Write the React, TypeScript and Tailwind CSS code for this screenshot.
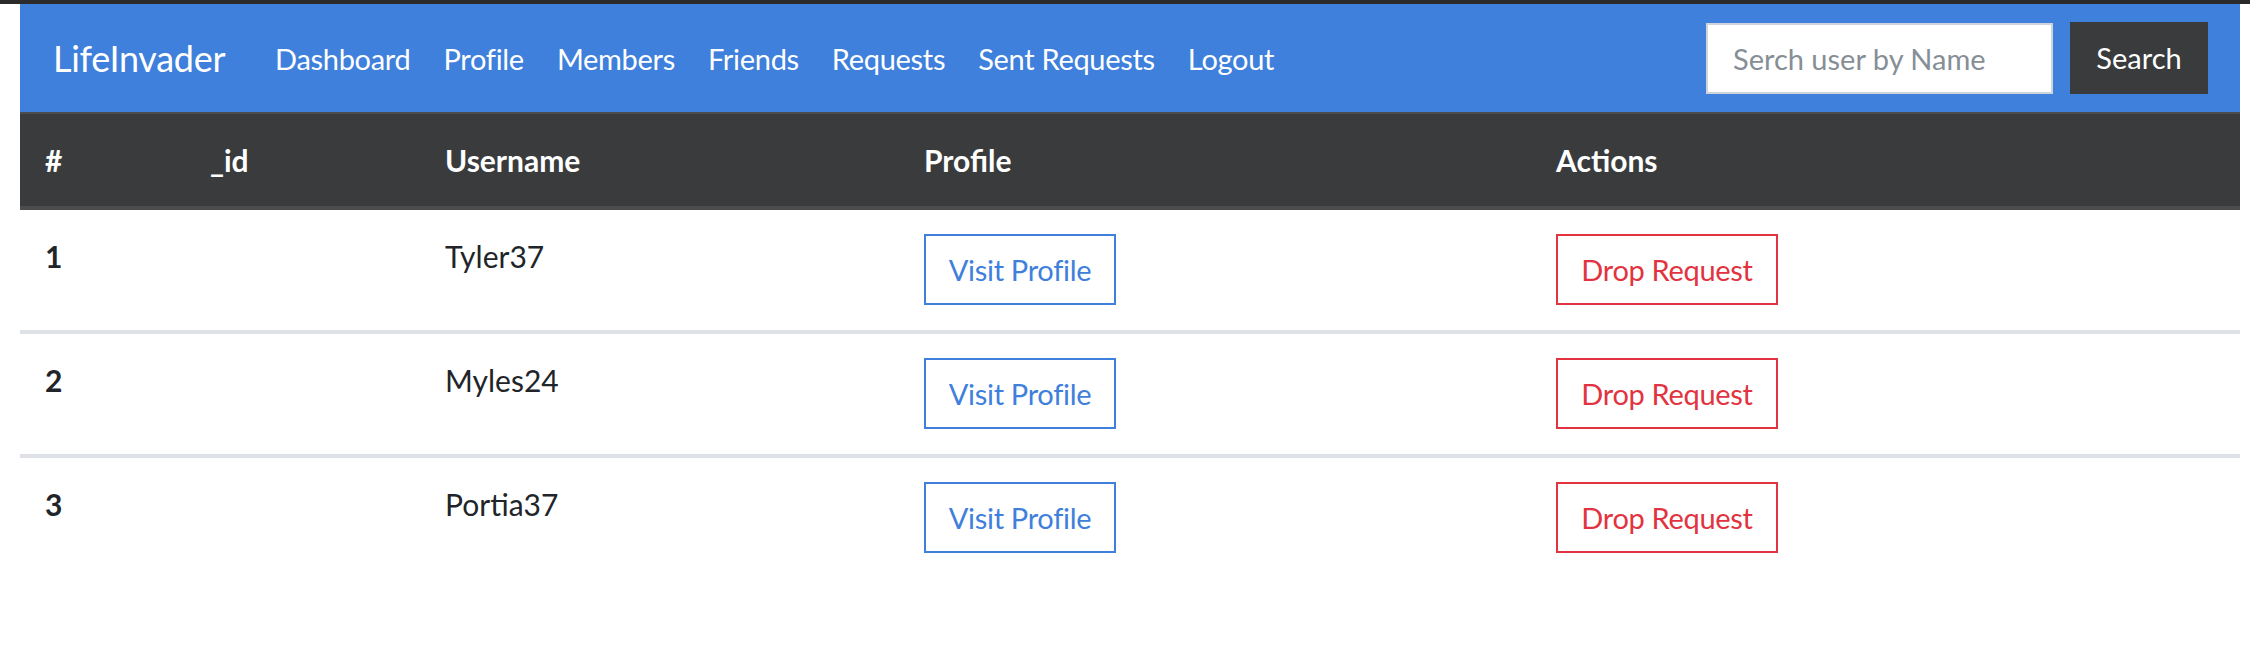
import React from "react";

const navLinks = ["Dashboard", "Profile", "Members", "Friends", "Requests", "Sent Requests", "Logout"];

const requests = [
  { n: 1, id: "", username: "Tyler37" },
  { n: 2, id: "", username: "Myles24" },
  { n: 3, id: "", username: "Portia37" },
];

const cols = "grid grid-cols-[165px_235px_479px_632px_1fr]";

export default function App() {
  return (
    <div className="min-h-[646px] w-[2250px] bg-white font-['Lato','Liberation_Sans',sans-serif] text-[30px] text-[#212529]">
      <div className="h-[4px] bg-[#2b2b2b]" />
      <div className="ml-[20px] w-[2220px]">
        {/* navbar */}
        <nav className="flex h-[108px] items-center bg-[#3e80dc] pl-[33px] pr-[32px]">
          <a className="w-[222px] text-[36px] leading-none tracking-[-0.3px] text-white">LifeInvader</a>
          <ul className="flex items-center gap-[33px]">
            {navLinks.map((l) => (
              <li key={l}>
                <a className="text-[29px] leading-none tracking-[-0.3px] text-white">{l}</a>
              </li>
            ))}
          </ul>
          <form className="ml-auto flex items-center gap-[17px]">
            <input
              className="h-[71px] w-[347px] border-2 border-[#ced4da] bg-white px-[25px] text-[29px] text-[#495057] outline-none placeholder:text-[#868e96]"
              placeholder="Serch user by Name"
            />
            <button type="button" className="h-[72px] w-[138px] bg-[#3a3b3d] text-[29px] text-white">
              Search
            </button>
          </form>
        </nav>

        {/* table */}
        <div>
          <div className={`${cols} border-t-2 border-b-4 border-[#4b4c4e] bg-[#3a3b3d] font-bold text-white`}>
            {["#", "_id", "Username", "Profile", "Actions"].map((h) => (
              <div key={h} className="px-[25px] py-[22px] leading-[48px]">
                {h}
              </div>
            ))}
          </div>
          {requests.map((r, i) => (
            <div key={r.n} className={`${cols} ${i > 0 ? "border-t-4 border-[#dee2e6]" : ""}`}>
              <div className="px-[25px] pt-[24px] pb-[25px] font-bold leading-[45px]">{r.n}</div>
              <div className="px-[25px] pt-[24px] pb-[25px] leading-[45px]">{r.id}</div>
              <div className="px-[25px] pt-[24px] pb-[25px] leading-[45px]">{r.username}</div>
              <div className="px-[25px] pt-[24px] pb-[25px]">
                <button className="h-[71px] w-[192px] border-2 border-[#3e80dc] text-[29px] tracking-[-0.3px] text-[#3e80dc]">
                  Visit Profile
                </button>
              </div>
              <div className="px-[25px] pt-[24px] pb-[25px]">
                <button className="h-[71px] w-[222px] border-2 border-[#e23340] text-[29px] tracking-[-0.3px] text-[#e23340]">
                  Drop Request
                </button>
              </div>
            </div>
          ))}
        </div>
      </div>
    </div>
  );
}
